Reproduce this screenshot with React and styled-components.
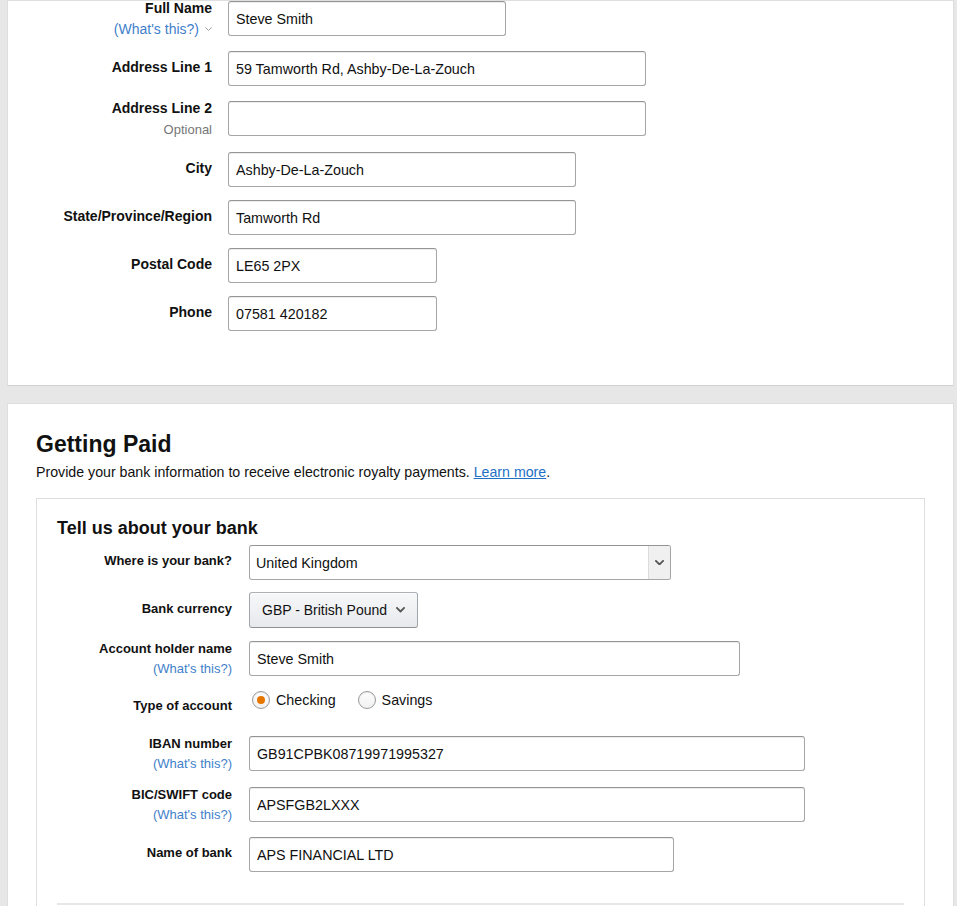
import React from 'react';
import styled, { createGlobalStyle } from 'styled-components';

const Global = createGlobalStyle`
  html, body { margin: 0; padding: 0; background: #e7e7e7; }
  body { font-family: "Liberation Sans", Arial, sans-serif; color: #111; }
  * { box-sizing: border-box; }
`;

const Page = styled.div`
  padding: 0 3px 0 7px;
  display: flex;
  flex-direction: column;
  gap: 17px;
`;

const Card = styled.section`
  background: #fff;
  border: 1px solid #dedede;
  border-bottom-color: #d2d2d2;
  padding: ${(p) => p.$pad};
`;

const Row = styled.div`
  display: flex;
  align-items: center;
  height: ${(p) => p.$h || 35}px;
  margin-top: ${(p) => p.$mt || 0}px;
`;

const Label = styled.div`
  flex: none;
  width: ${(p) => p.$w}px;
  margin-right: ${(p) => p.$gap}px;
  margin-bottom: ${(p) => (p.$lift ? 3 : 0)}px;
  text-align: right;
  font-weight: bold;
  font-size: ${(p) => p.$size}px;
  line-height: ${(p) => p.$lh}px;
  color: #111;
  white-space: nowrap;
`;

const SubLine = styled.div`
  font-weight: normal;
  font-size: ${(p) => p.$size}px;
  color: ${(p) => (p.$muted ? '#767676' : '#3f7fcb')};
  display: flex;
  justify-content: flex-end;
  align-items: center;
  gap: 6px;
`;

const TextInput = styled.input`
  flex: none;
  width: ${(p) => p.$w}px;
  height: 35px;
  padding: 0 7px;
  border: 1px solid #a6a6a6;
  border-top-color: #949494;
  border-radius: 3px;
  box-shadow: 0 1px 0 rgba(255, 255, 255, 0.5), inset 0 1px 0 rgba(0, 0, 0, 0.07);
  font-family: "Liberation Sans", Arial, sans-serif;
  font-size: 14.3px;
  color: #111;
  background: #fff;
  outline: none;
`;

const SelectBox = styled.div`
  flex: none;
  width: ${(p) => p.$w}px;
  height: 35px;
  display: flex;
  border: 1px solid #a6a6a6;
  border-top-color: #949494;
  border-radius: 3px;
  overflow: hidden;
  background: #fff;
`;

const SelectValue = styled.div`
  flex: 1;
  display: flex;
  align-items: center;
  padding-left: 6px;
  font-size: 14.3px;
  color: #111;
`;

const SelectArrow = styled.div`
  flex: none;
  width: 22px;
  display: flex;
  align-items: center;
  justify-content: center;
  background: #f0f0f0;
  border-left: 1px solid #dcdcdc;
`;

const DropButton = styled.div`
  flex: none;
  width: ${(p) => p.$w}px;
  height: 36px;
  display: flex;
  align-items: center;
  gap: 9px;
  padding: 0 10px 0 12px;
  border: 1px solid #adb1b8;
  border-color: #adb1b8 #a2a6ac #8d9096;
  border-radius: 3px;
  background: linear-gradient(to bottom, #f7f8fa, #e7e9ec);
  box-shadow: inset 0 1px 0 rgba(255, 255, 255, 0.6);
  font-size: 14px;
  color: #111;
  white-space: nowrap;
`;

const RadioGroup = styled.div`
  align-self: flex-start;
  margin: 3px 0 0 3px;
  display: flex;
  align-items: center;
  gap: 22px;
`;

const RadioOption = styled.div`
  display: flex;
  align-items: center;
  gap: 6px;
  font-size: 14.3px;
  color: #111;
`;

const RadioCircle = styled.span`
  width: 18px;
  height: 18px;
  border-radius: 50%;
  border: 1px solid #9a9a9a;
  background: linear-gradient(to bottom, #fdfdfd, #f1f1f1);
  box-shadow: inset 0 1px 1px rgba(0, 0, 0, 0.08);
  display: flex;
  align-items: center;
  justify-content: center;
  &::after {
    content: '';
    width: 8px;
    height: 8px;
    border-radius: 50%;
    background: ${(p) => (p.$checked ? '#e77600' : 'transparent')};
  }
`;

const Heading = styled.h2`
  margin: 0;
  font-size: 23px;
  line-height: 28px;
  font-weight: bold;
  color: #111;
`;

const Intro = styled.p`
  margin: 4px 0 0;
  font-size: 14.2px;
  line-height: 20px;
  color: #111;
`;

const Link = styled.a`
  color: #1f6fc4;
  text-decoration: underline;
`;

const BankBox = styled.div`
  margin-top: 16px;
  border: 1px solid #dedede;
  padding: 18px 20px 40px 20px;
`;

const SubHeading = styled.h3`
  margin: 0;
  font-size: 18px;
  line-height: 22px;
  font-weight: bold;
  color: #111;
`;

const Divider = styled.div`
  margin-top: 31px;
  height: 2px;
  background: #e7e7e7;
`;

const Chevron = ({ size = 9, color = '#555', width = 2 }) => (
  <svg width={size} height={size * 0.6} viewBox="0 0 10 6" fill="none">
    <path d="M1 1l4 4 4-4" stroke={color} strokeWidth={width} strokeLinecap="round" strokeLinejoin="round" />
  </svg>
);

const AddrLabel = ({ children, sub, muted, chevron, lift }) => (
  <Label $w={176} $gap={16} $size={14} $lh={21} $lift={lift}>
    {children}
    {sub && (
      <SubLine $size={muted ? 13 : 14} $muted={muted}>
        {sub}
        {chevron && <Chevron size={7} color="#999" width={1.4} />}
      </SubLine>
    )}
  </Label>
);

const BankLabel = ({ children, sub, lift }) => (
  <Label $w={175} $gap={17} $size={13} $lh={20} $lift={lift}>
    {children}
    {sub && <SubLine $size={13}>{sub}</SubLine>}
  </Label>
);

export default function App() {
  return (
    <>
      <Global />
      <Page>
        <Card $pad="0 28px 54px">
          <Row>
            <AddrLabel sub="(What's this?)" chevron>Full Name</AddrLabel>
            <TextInput $w={278} readOnly value="Steve Smith" />
          </Row>
          <Row $mt={15}>
            <AddrLabel lift>Address Line 1</AddrLabel>
            <TextInput $w={418} readOnly value="59 Tamworth Rd, Ashby-De-La-Zouch" />
          </Row>
          <Row $mt={15}>
            <AddrLabel sub="Optional" muted>Address Line 2</AddrLabel>
            <TextInput $w={418} readOnly value="" />
          </Row>
          <Row $mt={16}>
            <AddrLabel lift>City</AddrLabel>
            <TextInput $w={348} readOnly value="Ashby-De-La-Zouch" />
          </Row>
          <Row $mt={13}>
            <AddrLabel lift>State/Province/Region</AddrLabel>
            <TextInput $w={348} readOnly value="Tamworth Rd" />
          </Row>
          <Row $mt={13}>
            <AddrLabel lift>Postal Code</AddrLabel>
            <TextInput $w={209} readOnly value="LE65 2PX" />
          </Row>
          <Row $mt={13}>
            <AddrLabel lift>Phone</AddrLabel>
            <TextInput $w={209} readOnly value="07581 420182" />
          </Row>
        </Card>

        <Card $pad="26px 28px 0">
          <Heading>Getting Paid</Heading>
          <Intro>
            Provide your bank information to receive electronic royalty payments.{' '}
            <Link href="#">Learn more</Link>.
          </Intro>
          <BankBox>
            <SubHeading>Tell us about your bank</SubHeading>
            <Row $mt={6}>
              <BankLabel lift>Where is your bank?</BankLabel>
              <SelectBox $w={422}>
                <SelectValue>United Kingdom</SelectValue>
                <SelectArrow>
                  <Chevron size={9} color="#555" width={2} />
                </SelectArrow>
              </SelectBox>
            </Row>
            <Row $mt={12} $h={36}>
              <BankLabel lift>Bank currency</BankLabel>
              <DropButton $w={169}>
                GBP - British Pound
                <Chevron size={9} color="#555" width={2} />
              </DropButton>
            </Row>
            <Row $mt={13}>
              <BankLabel sub="(What's this?)">Account holder name</BankLabel>
              <TextInput $w={491} readOnly value="Steve Smith" />
            </Row>
            <Row $mt={12}>
              <BankLabel>Type of account</BankLabel>
              <RadioGroup>
                <RadioOption>
                  <RadioCircle $checked />
                  Checking
                </RadioOption>
                <RadioOption>
                  <RadioCircle />
                  Savings
                </RadioOption>
              </RadioGroup>
            </Row>
            <Row $mt={13}>
              <BankLabel sub="(What's this?)">IBAN number</BankLabel>
              <TextInput $w={556} readOnly value="GB91CPBK08719971995327" />
            </Row>
            <Row $mt={16}>
              <BankLabel sub="(What's this?)">BIC/SWIFT code</BankLabel>
              <TextInput $w={556} readOnly value="APSFGB2LXXX" />
            </Row>
            <Row $mt={15}>
              <BankLabel lift>Name of bank</BankLabel>
              <TextInput $w={425} readOnly value="APS FINANCIAL LTD" />
            </Row>
            <Divider />
          </BankBox>
        </Card>
      </Page>
    </>
  );
}
